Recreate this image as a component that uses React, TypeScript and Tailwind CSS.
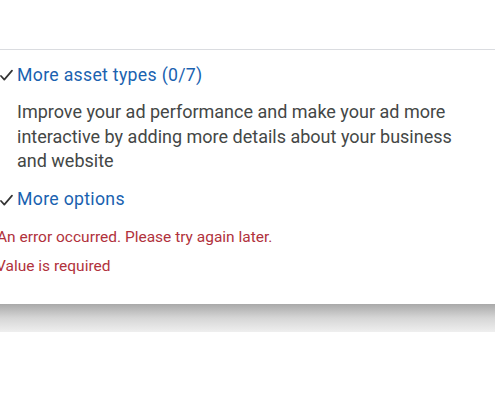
function Tick() {
  return (
    <svg width="13" height="12" viewBox="0 0 13 12" className="mr-[4px] shrink-0">
      <path d="M1 7 L4.3 10.6 L12 1.6" fill="none" stroke="#333" strokeWidth="1.7" strokeLinecap="round" strokeLinejoin="round" />
    </svg>
  );
}

export default function App() {
  return (
    <div className="w-[495px] h-[400px] bg-white overflow-hidden font-['Roboto',sans-serif]">
      {/* top strip */}
      <div className="h-[50px] border-b border-[#dadce0] bg-white" />

      {/* card */}
      <div className="bg-white pt-[12px] h-[254px] relative z-10">
        <div className="flex items-center h-[26px]">
          <Tick />
          <span className="text-[17.7px] tracking-[0.3px] text-[#1a62b0]">More asset types (0/7)</span>
        </div>
        <p className="mt-[12px] pl-[17px] pr-[30px] text-[18px] leading-[24.5px] text-[#444746]">
          Improve your ad performance and make your ad more interactive by adding more details about your business
          and website
        </p>
        <div className="mt-[13px] flex items-center h-[26px]">
          <Tick />
          <span className="text-[17.7px] tracking-[0.3px] text-[#1a62b0]">More options</span>
        </div>
        <div className="mt-[13px] -ml-[3px] text-[15.5px] leading-[22px] text-[#b1323c] whitespace-nowrap">
          An error occurred. Please try again later.
        </div>
        <div className="mt-[7px] -ml-[4px] text-[15.5px] leading-[22px] text-[#b1323c] whitespace-nowrap">
          Value is required
        </div>
      </div>

      {/* grey band below */}
      <div className="h-[28px] bg-gradient-to-b from-[#a9a9a9] via-[#d6d6d6] to-[#efefef]" />
    </div>
  );
}
